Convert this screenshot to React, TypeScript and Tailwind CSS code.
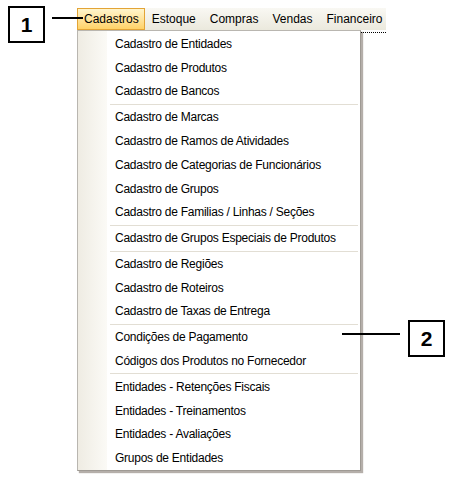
import React from 'react'

type Entry = { label: string; sepBefore?: boolean }

const topMenus = ['Cadastros', 'Estoque', 'Compras', 'Vendas', 'Financeiro']

const entries: Entry[] = [
  { label: 'Cadastro de Entidades' },
  { label: 'Cadastro de Produtos' },
  { label: 'Cadastro de Bancos' },
  { label: 'Cadastro de Marcas', sepBefore: true },
  { label: 'Cadastro de Ramos de Atividades' },
  { label: 'Cadastro de Categorias de Funcionários' },
  { label: 'Cadastro de Grupos' },
  { label: 'Cadastro de Familias / Linhas / Seções' },
  { label: 'Cadastro de Grupos Especiais de Produtos', sepBefore: true },
  { label: 'Cadastro de Regiões', sepBefore: true },
  { label: 'Cadastro de Roteiros' },
  { label: 'Cadastro de Taxas de Entrega' },
  { label: 'Condições de Pagamento', sepBefore: true },
  { label: 'Códigos dos Produtos no Fornecedor' },
  { label: 'Entidades - Retenções Fiscais', sepBefore: true },
  { label: 'Entidades - Treinamentos' },
  { label: 'Entidades - Avaliações' },
  { label: 'Grupos de Entidades' },
]

// numbered callout box used in the help screenshot
function Callout({ n }: { n: string }) {
  return (
    <div className="flex h-[37px] w-[37px] items-center justify-center border-2 border-black bg-white text-[21px] font-bold text-black">
      {n}
    </div>
  )
}

export default function App() {
  return (
    <div
      className="relative h-[479px] w-[452px] overflow-hidden bg-white text-[12px] text-black"
      style={{ fontFamily: '"Liberation Sans", Arial, sans-serif' }}
    >
      <div className="ml-[77px] pt-[8px]">
        {/* Menu bar */}
        <div className="flex h-[22px] w-[309px] items-stretch bg-gradient-to-b from-[#f9f8f3] to-[#ebe9dd]">
          {topMenus.map((m, i) =>
            i === 0 ? (
              <div
                key={m}
                className="flex items-center border border-[#e3a436] bg-gradient-to-b from-[#fff5cc] to-[#ffd266] pl-[6px] pr-[5px]"
              >
                {m}
              </div>
            ) : (
              <div key={m} className="flex items-center px-[7px]">
                {m}
              </div>
            )
          )}
        </div>

        <div className="flex items-start">
          {/* Dropdown */}
          <div className="flex h-[441px] w-[284px] border border-[#9f9a94] border-t-[#b9b6b0] border-l-[#b9b6b0] bg-white shadow-[2px_2px_1px_rgba(120,110,100,0.55)]">
            <div className="w-[29px] shrink-0 bg-gradient-to-r from-[#efece3] to-[#fbfaf6]" />
            <div className="flex flex-1 flex-col pt-[1px] tracking-[-0.25px]">
              {entries.map((e) => (
                <React.Fragment key={e.label}>
                  {e.sepBefore && <div className="ml-[3px] mr-[2px] my-[0.5px] h-px bg-[#e2ded4]" />}
                  <div className="flex h-[24px] items-center pl-[8px]">{e.label}</div>
                </React.Fragment>
              ))}
            </div>
          </div>
          <div className="mt-[2px] w-[25px] border-t border-dotted border-black" />
        </div>
      </div>

      {/* Callout 1 */}
      <div className="absolute left-[8px] top-[6px] flex items-start">
        <Callout n="1" />
        <div className="ml-[7px] mt-[11px] h-[2px] w-[31px] bg-black" />
      </div>

      {/* Callout 2 */}
      <div className="absolute left-[342px] top-[320px] flex items-start">
        <div className="mr-[8px] mt-[13px] h-[2px] w-[58px] bg-black" />
        <Callout n="2" />
      </div>
    </div>
  )
}
